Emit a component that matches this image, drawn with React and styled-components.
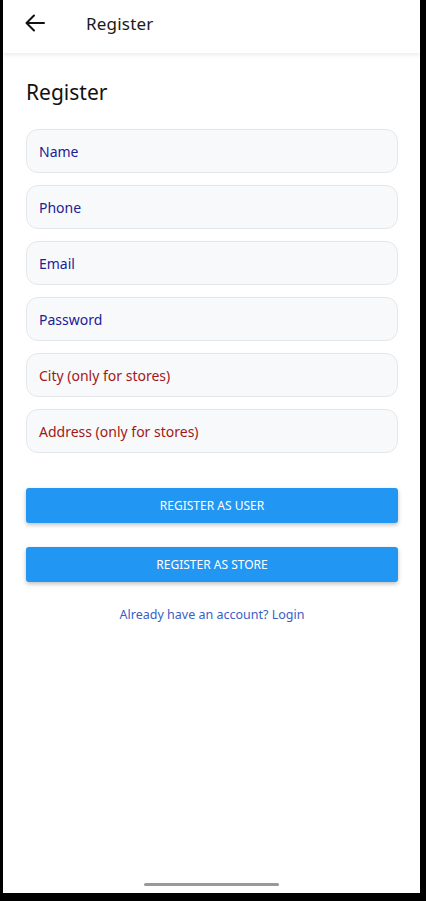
import React from "react";
import styled, { createGlobalStyle } from "styled-components";

const Global = createGlobalStyle`
  html, body { margin: 0; padding: 0; background: #000; }
  body { font-family: "Noto Sans", "Open Sans", sans-serif; }
  * { box-sizing: border-box; }
`;

const Frame = styled.div`
  width: 426px;
  height: 901px;
  background: #000;
  padding: 0 6px 8px 3px;
  display: flex;
`;

const Screen = styled.div`
  flex: 1;
  background: #fff;
  display: flex;
  flex-direction: column;
  position: relative;
`;

const AppBar = styled.header`
  height: 53px;
  display: flex;
  align-items: center;
  padding-left: 21px;
  padding-bottom: 7px;
  gap: 40px;
  background: #fff;
  box-shadow: 0 2px 4px rgba(0, 0, 0, 0.08);
  position: relative;
  z-index: 1;
`;

const BackButton = styled.button`
  border: none;
  background: none;
  padding: 0;
  width: 22px;
  height: 22px;
  display: flex;
  align-items: center;
  justify-content: center;
  color: #111;
`;

const BarTitle = styled.h1`
  margin: 0;
  font-size: 17px;
  font-weight: 400;
  color: #1a1a1a;
  letter-spacing: 0.2px;
`;

const Body = styled.main`
  display: flex;
  flex-direction: column;
  padding: 24px 22px 0 23px;
`;

const Heading = styled.h2`
  margin: 0 0 22px 0;
  font-size: 21px;
  font-weight: 400;
  color: #111;
  line-height: 30px;
`;

const Fields = styled.div`
  display: flex;
  flex-direction: column;
  gap: 12px;
`;

const Field = styled.div`
  height: 44px;
  border: 1px solid #e4e6ea;
  border-radius: 12px;
  background: #f8f9fb;
  display: flex;
  align-items: center;
  padding-left: 12px;
  font-size: 14px;
  color: ${(p) => (p.$store ? "#a01818" : "#1b2196")};
`;

const Buttons = styled.div`
  display: flex;
  flex-direction: column;
  gap: 24px;
  margin-top: 35px;
`;

const Button = styled.button`
  height: 35px;
  width: 100%;
  border: none;
  border-radius: 3px;
  background: #2196f3;
  color: #fff;
  font-family: inherit;
  font-size: 12px;
  letter-spacing: 0;
  text-transform: uppercase;
  box-shadow: 0 2px 4px rgba(0, 0, 0, 0.25);
`;

const LoginLink = styled.a`
  margin-top: 24px;
  align-self: center;
  font-size: 12.5px;
  color: #3a5ec4;
  text-decoration: none;
`;

const HomeBar = styled.div`
  position: absolute;
  bottom: 7px;
  left: 141px;
  width: 135px;
  height: 3px;
  border-radius: 2px;
  background: #999;
`;

export default function App() {
  return (
    <>
      <Global />
      <Frame>
        <Screen>
          <AppBar>
            <BackButton aria-label="Back">
              <svg width="20" height="18" viewBox="0 0 20 18" fill="none" stroke="#111" strokeWidth="2" strokeLinecap="round" strokeLinejoin="round">
                <path d="M19 9H2" />
                <path d="M9 1.5L1.5 9L9 16.5" />
              </svg>
            </BackButton>
            <BarTitle>Register</BarTitle>
          </AppBar>
          <Body>
            <Heading>Register</Heading>
            <Fields>
              <Field>Name</Field>
              <Field>Phone</Field>
              <Field>Email</Field>
              <Field>Password</Field>
              <Field $store>City (only for stores)</Field>
              <Field $store>Address (only for stores)</Field>
            </Fields>
            <Buttons>
              <Button>Register as user</Button>
              <Button>Register as store</Button>
            </Buttons>
            <LoginLink href="#">Already have an account? Login</LoginLink>
          </Body>
          <HomeBar />
        </Screen>
      </Frame>
    </>
  );
}
